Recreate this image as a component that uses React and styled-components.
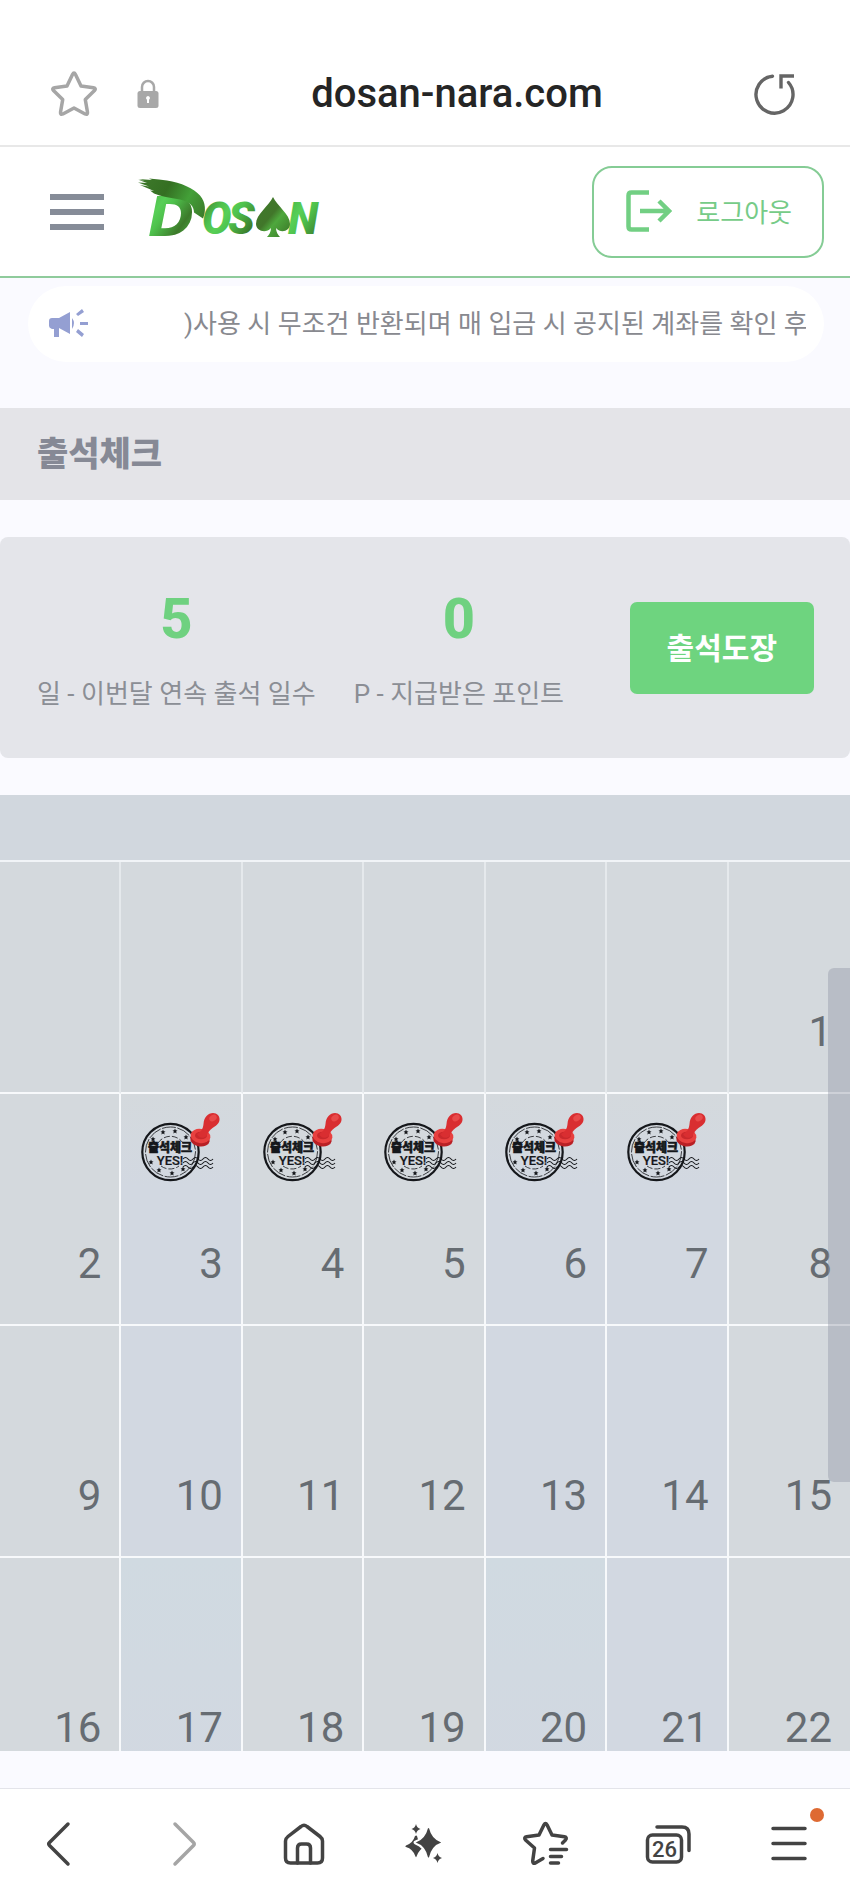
import React from "react"
import styled, { createGlobalStyle } from "styled-components"

const GlobalStyle = createGlobalStyle`
  * {
    box-sizing: border-box;
  }

  body {
    margin: 0;
    background: #fafaff;
    font-family: Roboto, "Noto Sans CJK KR", sans-serif;
    color: #868a92;
  }

  button {
    margin: 0;
    padding: 0;
    border: 0;
    background: none;
    font-family: inherit;
    color: inherit;
    cursor: pointer;
  }

  svg {
    display: block;
    flex: none;
  }
`

const Screen = styled.div`
  display: flex;
  flex-direction: column;
  height: 100vh;
`

// Browser address bar
const AddressBar = styled.div`
  display: flex;
  align-items: center;
  padding: 42px 54px 0 50px;
  height: 147px;
  flex: none;
  background: #fff;
  border-bottom: 2px solid #e8e8e8;
`

const LockIcon = styled.svg`
  margin-left: 38px;
`

const Address = styled.div`
  flex: 1;
  text-align: center;
  font-size: 40px;
  line-height: 48px;
  font-weight: 500;
  color: #252525;
`

// Site header
const Header = styled.header`
  display: flex;
  align-items: center;
  height: 131px;
  flex: none;
  padding: 0 26px 0 50px;
  background: #fff;
  border-bottom: 2px solid #8fcb9c;
`

const MenuButton = styled.button`
  display: flex;
  flex-direction: column;
  gap: 9px;
  width: 54px;
`

const MenuBar = styled.span`
  height: 6px;
  background: #868c98;
`

const LogoLink = styled.a`
  margin-left: 30px;
`

const LogoutButton = styled.button`
  display: flex;
  align-items: center;
  gap: 24px;
  height: 92px;
  margin-left: auto;
  padding: 0 30px 2px 32px;
  border: 2px solid #85cc95;
  border-radius: 20px;
  font-size: 26px;
  color: #76cb88;
`

const Notice = styled.div`
  display: flex;
  align-items: center;
  flex: none;
  gap: 94px;
  height: 76px;
  margin: 8px 26px 46px 28px;
  padding: 0 18px 0 20px;
  border-radius: 38px;
  background: #fff;
`

const NoticeText = styled.p`
  flex: 1;
  margin: 0;
  overflow: hidden;
  white-space: nowrap;
  font-size: 26px;
  line-height: 38px;
  color: #88898f;
`

const PageTitle = styled.h1`
  flex: none;
  margin: 0;
  padding: 0 37px;
  font-size: 34px;
  line-height: 92px;
  font-weight: 800;
  color: #868995;
  background: #e4e4e8;
`

const Summary = styled.section`
  display: flex;
  align-items: center;
  gap: 38px;
  flex: none;
  height: 221px;
  margin: 37px 0;
  padding: 0 36px 0 37px;
  border-radius: 8px;
  background: #e4e5ea;
`

const Stat = styled.div`
  display: flex;
  flex-direction: column;
  align-items: center;
  gap: 20px;
`

const StatValue = styled.strong`
  font-size: 56px;
  line-height: 72px;
  font-weight: 800;
  color: #6fd180;
`

const StatLabel = styled.span`
  font-size: 26px;
  line-height: 38px;
  white-space: nowrap;
  color: #8b8e95;
`

const StampButton = styled.button`
  height: 92px;
  margin-left: auto;
  padding: 0 37px 4px;
  border-radius: 7px;
  background: #6ed47f;
  font-size: 30px;
  font-weight: 700;
  color: #fff;
`

// The calendar is cut off by the bottom of the viewport
const CalendarView = styled.div`
  flex: 1;
  min-height: 0;
  margin-bottom: 37px;
  overflow: hidden;
`

const Calendar = styled.table`
  width: 100%;
  table-layout: fixed;
  border-collapse: separate;
  border-spacing: 0;
`

const WeekHead = styled.th`
  height: 67px;
  padding: 0;
  background: #d1d7de;
  border-bottom: 2px solid #f1f4f7;
`

const tones = {
  gray: "#d4d9dd",
  mixed: "linear-gradient(#d4d9dd, #d2d8e1 40%)",
  blue: "#d2d8e1",
  sky: "linear-gradient(#d0dae1, #d2d8e1)",
}

const DayCell = styled.td`
  padding: 0;
  background: ${(props) => tones[props.$tone]};
  border-bottom: 2px solid #f7f9fb;
  border-right: 2px solid ${(props) => (props.$faint ? "#e5e9ec" : "#f7f9fb")};

  &:last-child {
    border-right: 0;
  }
`

const Day = styled.div`
  display: flex;
  flex-direction: column;
  align-items: center;
  justify-content: space-between;
  height: 230px;
  padding: 18px 18px 36px;
`

const DayNumber = styled.span`
  margin-top: auto;
  align-self: flex-end;
  font-size: 42px;
  line-height: 48px;
  color: #666c72;
`

const ScrollThumb = styled.div`
  position: fixed;
  top: 968px;
  right: 0;
  width: 22px;
  height: 514px;
  border-radius: 6px 0 0 6px;
  background: rgba(140, 144, 160, 0.38);
`

const BottomNav = styled.nav`
  display: grid;
  grid-template-columns: repeat(7, 1fr);
  flex: none;
  height: 110px;
  background: #fff;
  border-top: 1px solid #e3e4ea;
`

const NavButton = styled.button`
  display: flex;
  align-items: center;
  justify-content: center;
  color: ${(props) => (props.$muted ? "#a5a5a5" : "#434343")};
`

const MenuWrap = styled.span`
  position: relative;
`

const Badge = styled.span`
  position: absolute;
  top: -12px;
  right: -11px;
  width: 14px;
  height: 14px;
  border-radius: 50%;
  background: #de6a33;
`

const Logo = () => (
  <svg width="192" height="88" viewBox="134 168 192 88" role="img" aria-label="DOSAN">
    <defs>
      <linearGradient id="leaf" gradientUnits="userSpaceOnUse" x1="160" y1="205" x2="184" y2="222" spreadMethod="reflect">
        <stop offset="0" stopColor="#58cf57" />
        <stop offset="0.3" stopColor="#4fc24d" />
        <stop offset="1" stopColor="#3c7a2a" />
      </linearGradient>
      <linearGradient id="brush" gradientUnits="userSpaceOnUse" x1="138" y1="178" x2="206" y2="214">
        <stop offset="0" stopColor="#3f7a2c" />
        <stop offset="0.4" stopColor="#346f22" />
        <stop offset="0.7" stopColor="#43a038" />
        <stop offset="1" stopColor="#3c7a2a" />
      </linearGradient>
      <linearGradient id="spade" x1="0" y1="0" x2="1" y2="1">
        <stop offset="0" stopColor="#3e7a2a" />
        <stop offset="0.45" stopColor="#41762a" />
        <stop offset="0.6" stopColor="#4ea83d" />
        <stop offset="1" stopColor="#3a7426" />
      </linearGradient>
    </defs>
    <g fill="url(#leaf)" fontWeight="900" fontStyle="italic">
      <text x="148" y="236" fontSize="56" fontFamily="DejaVu Sans, sans-serif">
        D
      </text>
      <g fontFamily="Roboto, sans-serif" fontSize="44">
        <text x="202" y="234">O</text>
        <text x="228" y="234">S</text>
        <text x="288" y="234">N</text>
      </g>
    </g>
    <path
      fill="url(#brush)"
      d="M138 179l14 1 -3-1.500 10 1 8 1c14 2 27 8 33 15 6 7 6 16 3 23l-9-6c0-6-4-11-14-13-10-2-19-3-26-6l-4-3 4 .5-14-6 9 1.500-11-4 9 .5-8-3 6 .5z"
    />
    <path
      fill="url(#spade)"
      d="M273 197c4 9 17 17 17 27 0 7-9 10-14 4 0 4 2 7 4 9h-13c2-2 4-5 4-9-5 6-15 3-15-4 0-10 13-18 17-27z"
    />
  </svg>
)

const star = (x, y) => `M${x} ${y - 2.4}l.8 1.6 1.7.2-1.3 1.2.4 1.8-1.6-.9-1.6.9.4-1.8-1.3-1.2 1.7-.2z`

const Stamp = () => (
  <svg width="80" height="70" viewBox="0 0 80 70" role="img" aria-label="출석체크 YES!">
    <g fill="none" stroke="#15171b">
      <circle cx="29.500" cy="40" r="28.200" strokeWidth="2.200" />
      <circle cx="29.500" cy="40" r="25" strokeWidth=".8" strokeDasharray="14 1.500" />
      <path strokeWidth=".8" strokeDasharray="6 2" d="M17 31a15 15 0 0 1 25 0M20 54a15 15 0 0 0 18 0" />
      <path
        strokeWidth="1.100"
        d="M42 47q2.500-3 5 0t5 0 5 0 5 0 5 0 5 0M42 51q2.500-3 5 0t5 0 5 0 5 0 5 0 5 0M42 55q2.500-3 5 0t5 0 5 0 5 0 5 0 5 0"
      />
    </g>
    <path
      fill="#15171b"
      d={[[22, 20], [34, 19], [45, 25], [12, 27], [10, 50], [18, 58], [31, 61], [42, 57]]
        .map(([x, y]) => star(x, y))
        .join("")}
    />
    <g fill="#15171b" stroke="#15171b" textAnchor="middle">
      <text x="29" y="40" fontSize="12" fontWeight="900" strokeWidth=".6" fontFamily="Noto Sans CJK KR, sans-serif">
        출석체크
      </text>
      <text x="29" y="53" fontSize="13" fontWeight="500" strokeWidth=".2" fontFamily="Roboto, sans-serif">
        YES!
      </text>
    </g>
    <ellipse cx="59" cy="27.500" rx="9.800" ry="7" fill="#b92025" transform="rotate(10 59 27.500)" />
    <ellipse cx="59.500" cy="24" rx="10" ry="7" fill="#e8403f" transform="rotate(10 59.500 24)" />
    <ellipse cx="60" cy="23.500" rx="6" ry="3.800" fill="#c9282c" />
    <path
      fill="#d92e31"
      d="M56 22c4-2 6-5 6.500-10C63 5 67 1 72 1c4 0 7 3 6.500 7-.5 4-4 6-7 8-3 2-5 5-6 8-3 3-8 2-9.500-2z"
    />
    <ellipse cx="72" cy="6" rx="4" ry="3" fill="#e84a4a" transform="rotate(-35 72 6)" />
  </svg>
)

const Icon = ({ children }) => (
  <svg
    width="48"
    height="48"
    viewBox="0 0 48 48"
    fill="none"
    stroke="currentColor"
    strokeWidth="3.500"
    strokeLinecap="round"
    strokeLinejoin="round"
    aria-hidden="true"
  >
    {children}
  </svg>
)

const weeks = [
  [null, null, null, null, null, null, 1],
  [2, 3, 4, 5, 6, 7, 8],
  [9, 10, 11, 12, 13, 14, 15],
  [16, 17, 18, 19, 20, 21, 22],
]

const stampedDays = [3, 4, 5, 6, 7]

const dayTones = {
  3: "mixed",
  6: "mixed",
  7: "mixed",
  10: "blue",
  13: "blue",
  14: "blue",
  17: "sky",
  20: "sky",
  21: "blue",
}

const App = () => {
  return (
    <Screen>
      <GlobalStyle />
      <AddressBar>
        <svg width="48" height="48" viewBox="0 0 48 48" fill="none" stroke="#a6a6a6" strokeWidth="3.500" strokeLinejoin="round">
          <path d="M22.500 4.500q1.500-3 3 0l5.500 11.500 12.500 1.800q3 .6 1 2.800l-9.200 9 2.200 12.600q.3 3-2.400 1.800L24 38l-11.100 6q-2.700 1.200-2.400-1.800l2.200-12.600-9.200-9q-2-2.200 1-2.800L17 16z" />
        </svg>
        <LockIcon width="24" height="30" viewBox="0 0 24 30">
          <path d="M6 13V8a6 6 0 0 1 12 0v5" fill="none" stroke="#a8a8a8" strokeWidth="2.500" />
          <rect x="1.500" y="12" width="21" height="17" rx="2.500" fill="#a8a8a8" />
          <path d="M12 17a2 2 0 0 1 1 3.700V24h-2v-3.300A2 2 0 0 1 12 17z" fill="#fff" />
        </LockIcon>
        <Address>dosan-nara.com</Address>
        <button aria-label="새로고침">
          <svg width="42" height="42" viewBox="0 0 42 42" fill="none" stroke="#656565" strokeWidth="3.400">
            <path d="M18.500 3.200A18.500 18.500 0 1 0 34.500 9.500" strokeLinecap="round" />
            <path d="M27 15.500V3h13" />
          </svg>
        </button>
      </AddressBar>

      <Header>
        <MenuButton aria-label="메뉴">
          <MenuBar />
          <MenuBar />
          <MenuBar />
        </MenuButton>
        <LogoLink href="#">
          <Logo />
        </LogoLink>
        <LogoutButton>
          <svg width="46" height="42" viewBox="0 0 46 42" fill="none" stroke="#72cf83" strokeWidth="4.500">
            <path d="M23 2.500H5.500Q2.500 2.500 2.500 5.500v31q0 3 3 3H23" />
            <path d="M14 21h29M33 11l10 10-10 10" />
          </svg>
          로그아웃
        </LogoutButton>
      </Header>

      <Notice>
        <svg width="42" height="30" viewBox="0 0 42 30" fill="#949fd2" aria-hidden="true">
          <path d="M4 9h7L22 3v22l-11-6v9H6v-8H4q-3-1-3-3v-5q0-3 3-3z" />
          <path d="M24 9q4 5 0 11zM28 5l6-5 2 3-6 4zM32 13h8v3h-8zM28 23l2-3 6 5-2 3z" />
        </svg>
        <NoticeText>)사용 시 무조건 반환되며 매 입금 시 공지된 계좌를 확인 후</NoticeText>
      </Notice>

      <PageTitle>출석체크</PageTitle>

      <Summary>
        <Stat>
          <StatValue>5</StatValue>
          <StatLabel>일 - 이번달 연속 출석 일수</StatLabel>
        </Stat>
        <Stat>
          <StatValue>0</StatValue>
          <StatLabel>P - 지급받은 포인트</StatLabel>
        </Stat>
        <StampButton>출석도장</StampButton>
      </Summary>

      <CalendarView>
        <Calendar>
          <thead>
            <tr>
              <WeekHead colSpan={7} />
            </tr>
          </thead>
          <tbody>
            {weeks.map((week, row) => (
              <tr key={row}>
                {week.map((day, col) => (
                  <DayCell key={col} $tone={dayTones[day] || "gray"} $faint={row === 0}>
                    <Day>
                      {stampedDays.includes(day) && <Stamp />}
                      {day && <DayNumber>{day}</DayNumber>}
                    </Day>
                  </DayCell>
                ))}
              </tr>
            ))}
          </tbody>
        </Calendar>
      </CalendarView>

      <BottomNav>
        <NavButton aria-label="뒤로">
          <Icon>
            <path d="M31 4L12.500 22.500q-1.500 1.500 0 3L31 44" />
          </Icon>
        </NavButton>
        <NavButton aria-label="앞으로" $muted>
          <Icon>
            <path d="M17 4l18.500 18.500q1.500 1.500 0 3L17 44" />
          </Icon>
        </NavButton>
        <NavButton aria-label="홈">
          <Icon>
            <path d="M21 6.500q3-2.500 6 0l13 10q2.500 2 2.500 4.500v17q0 5-5 5h-27q-5 0-5-5V21q0-2.500 2.500-4.500z" />
            <path d="M17.500 43V28q0-4 4-4h5q4 0 4 4v15" />
          </Icon>
        </NavButton>
        <NavButton aria-label="추천">
          <Icon>
            <g fill="currentColor" stroke="none">
              <path d="M14 16q1.500-1 2 0 1 7 9 10-7 3-9.500 10.500-.5 1.500-1 0Q12 29 5 27q-1.500-.5 0-1.500Q12 23 14 16z" />
              <path
                stroke="#fff"
                strokeWidth="2"
                d="M26 8q1.500-2 3 0 2.500 10.500 11.500 13.500 2 1 0 2-9 3-11.500 14-1.500 2-3 0-2.500-11-11.500-14-2-1 0-2Q23.500 18.500 26 8z"
              />
              <path d="M15 4q.8 4 4.500 5-3.700 1-4.500 5-.8-4-4.500-5 3.700-1 4.500-5zM36.500 33q.8 4 4.500 5-3.700 1-4.500 5-.8-4-4.500-5 3.700-1 4.500-5z" />
            </g>
          </Icon>
        </NavButton>
        <NavButton aria-label="북마크">
          <Icon>
            <path d="M40.500 23l3-3q2-2.500-1-3.200L30 15 25 4.800q-1.500-2.800-3 0L17 15 4.500 16.800q-3 .7-1 3.200l9 8-1.800 13q0 3 2.600 2L21 38.500" />
            <path d="M28.500 29.500h16M28.500 36.500h11M28.500 43h8" />
          </Icon>
        </NavButton>
        <NavButton aria-label="탭 26개">
          <Icon>
            <rect x="3.500" y="15" width="34" height="27" rx="5" />
            <path d="M13 7h25q7 0 7 7v16.500" />
            <text x="20.500" y="36.500" textAnchor="middle" fontSize="22" fontWeight="500" fill="currentColor" stroke="none">
              26
            </text>
          </Icon>
        </NavButton>
        <NavButton aria-label="메뉴">
          <MenuWrap>
            <Icon>
              <path d="M8 8.500h32M8 23.500h32M8 38.500h32" />
            </Icon>
            <Badge />
          </MenuWrap>
        </NavButton>
      </BottomNav>
      <ScrollThumb />
    </Screen>
  )
}

export default App
